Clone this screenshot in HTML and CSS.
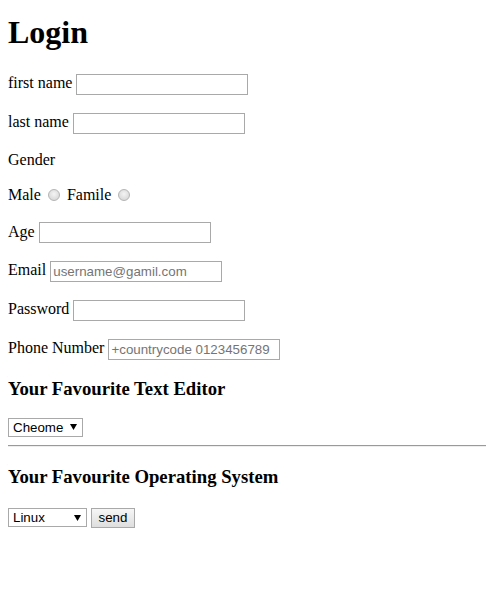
FILE: index.html
```html
<!DOCTYPE html>
<html>
<head>
<meta charset="utf-8">
<title>Login</title>
<link rel="stylesheet" href="styles.css">
</head>
<body>
<h1 class="title">Login</h1>
<form class="form">
  <p class="row row-field">first name <input class="field" type="text"></p>
  <p class="row row-field">last name <input class="field" type="text"></p>
  <p class="row row-text">Gender</p>
  <p class="row row-radio">Male <input class="radio" type="radio" name="g"> Famile <input class="radio" type="radio" name="g"></p>
  <p class="row row-field">Age <input class="field" type="text"></p>
  <p class="row row-field">Email <input class="field" type="email" placeholder="username@gamil.com"></p>
  <p class="row row-field">Password <input class="field" type="password"></p>
  <p class="row row-field">Phone Number <input class="field" type="tel" placeholder="+countrycode 0123456789"></p>
  <h3 class="section">Your Favourite Text Editor</h3>
  <select class="choice choice-editor"><option>Cheome</option></select>
  <hr class="divider">
  <h3 class="section section-os">Your Favourite Operating System</h3>
  <div class="actions">
    <select class="choice choice-os"><option>Linux</option></select>
    <button class="send" type="button">send</button>
  </div>
</form>
</body>
</html>
```
FILE: styles.css
```css
html, body { background: #fff; }
body {
  margin: 8px;
  font-family: "Liberation Serif", "Times New Roman", serif;
  font-size: 16px;
  color: #000;
}
.title {
  font-size: 32px;
  font-weight: bold;
  margin: 6px 0 21px;
  line-height: 37px;
}
.row {
  margin: 16px 0;
  line-height: 20px;
}
.row-field { line-height: 22px; }
.row-text { line-height: 19px; }
.row-radio { line-height: 20px; }
.field {
  box-sizing: border-box;
  width: 172px;
  height: 21px;
  border: 1px solid #a9a9a9;
  padding: 1px 2px;
  font-family: "Liberation Sans", Arial, sans-serif;
  font-size: 13.33px;
  vertical-align: middle;
  margin: 0;
  background: #fff;
}
.field::placeholder { color: #757575; }
.radio {
  -webkit-appearance: none;
  appearance: none;
  width: 12px;
  height: 12px;
  border-radius: 50%;
  border: 1px solid #b5b5b5;
  background: radial-gradient(circle at 50% 40%, #f4f4f4, #d0d0d0);
  margin: 0 3px 0 3px;
  vertical-align: -1px;
  box-sizing: border-box;
}
.section {
  font-size: 18.72px;
  font-weight: bold;
  margin: 18px 0;
  line-height: 22px;
}
.section-os {
  margin: 19px 0 20px;
}
.choice {
  -webkit-appearance: none;
  appearance: none;
  box-sizing: border-box;
  height: 19px;
  border: 1px solid #a9a9a9;
  font-family: "Liberation Sans", Arial, sans-serif;
  font-size: 13.33px;
  padding: 0 14px 0 4px;
  background: #fff url("data:image/svg+xml;utf8,<svg xmlns='http://www.w3.org/2000/svg' width='7' height='6'><path d='M0 0h7L3.5 6z' fill='black'/></svg>") no-repeat right 5px center;
  margin: 0;
  color: #000;
}
.choice-editor { width: 75px; }
.choice-os { width: 79px; }
.divider {
  margin: 8px 0 8px 0;
  width: calc(100% + 8px);
  box-sizing: border-box;
  border: 0;
  border-top: 1px solid #9a9a9a;
  border-bottom: 1px solid #eee;
  height: 0;
}
.actions {
  display: flex;
  gap: 4px;
  align-items: center;
}
.send {
  box-sizing: border-box;
  height: 20px;
  width: 44px;
  border: 1px solid #a9a9a9;
  background: linear-gradient(#f6f6f6, #dedede);
  font-family: "Liberation Sans", Arial, sans-serif;
  font-size: 13.33px;
  padding: 0;
  margin: 0;
  color: #000;
}
```
